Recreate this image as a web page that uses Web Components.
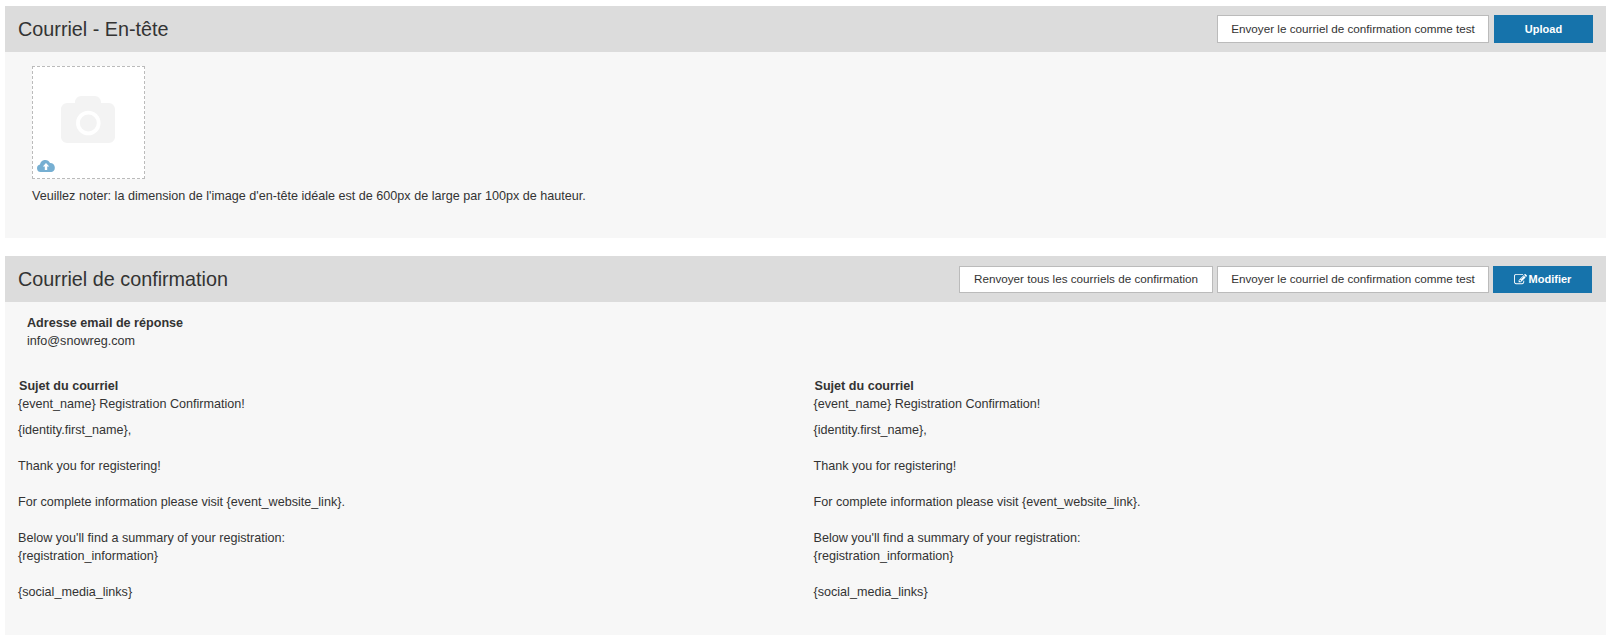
<!DOCTYPE html>
<html lang="fr">
<head>
<meta charset="utf-8">
<title>Courriel</title>
<style>
  html, body { margin: 0; background: #fff; }
  body { padding: 6px 2px 4px 5px; font: 12.6px/18px "Liberation Sans", Arial, sans-serif; color: #333; }
</style>
</head>
<body>
<x-panel heading="Courriel - En-tête" style="height:232px;--gap:5px">
  <x-button slot="actions" style="width:272px">Envoyer le courriel de confirmation comme test</x-button>
  <x-button slot="actions" primary style="width:99px">Upload</x-button>
  <x-upload-box></x-upload-box>
  <x-note>Veuillez noter: la dimension de l'image d'en-tête idéale est de 600px de large par 100px de hauteur.</x-note>
</x-panel>
<x-panel heading="Courriel de confirmation" tight style="height:379px;margin-top:18px">
  <x-button slot="actions" style="width:254px">Renvoyer tous les courriels de confirmation</x-button>
  <x-button slot="actions" style="width:272px">Envoyer le courriel de confirmation comme test</x-button>
  <x-button slot="actions" primary icon="edit" style="width:99px">Modifier</x-button>
  <x-field label="Adresse email de réponse" style="margin:12px 0 0 22px">info@snowreg.com</x-field>
  <x-mail-columns>
    <x-mail-preview></x-mail-preview>
    <x-mail-preview></x-mail-preview>
  </x-mail-columns>
</x-panel>

<script>
const panelTpl = document.createElement('template');
panelTpl.innerHTML = `
  <style>
    :host{display:block; background:#f7f7f7}
    header{display:flex; align-items:center; justify-content:space-between; height:46px; background:#dcdcdc; padding:0 13px}
    :host([tight]) header{padding-right:14px; --btn-h:27px}
    h2{margin:0; font-weight:400; font-size:19.8px; line-height:46px; color:#333}
    .actions{display:flex; gap:var(--gap, 4px)}
  </style>
  <header>
    <h2 id="title"></h2>
    <div class="actions"><slot name="actions"></slot></div>
  </header>
  <slot></slot>
`;
customElements.define('x-panel', class extends HTMLElement{
  constructor(){
    super();
    this.attachShadow({mode:'open'}).appendChild(panelTpl.content.cloneNode(true));
  }
  connectedCallback(){
    this.shadowRoot.getElementById('title').textContent = this.getAttribute('heading') ?? '';
  }
});

const buttonTpl = document.createElement('template');
buttonTpl.innerHTML = `
  <style>
    :host{display:flex; align-items:center; justify-content:center; box-sizing:border-box; height:var(--btn-h, 28px);
      background:#fff; border:1px solid #bbb; color:#333; font-size:11.7px; white-space:nowrap}
    :host([primary]){background:#1673ab; border-color:#1673ab; color:#fff; font-weight:700; font-size:11px}
    svg{width:13px; height:13px; margin-right:2px; fill:#fff; display:none}
    :host([icon]) svg{display:block}
  </style>
  <svg viewBox="0 0 1792 1792" aria-hidden="true">
    <path d="M888 1184l116-116-152-152-116 116v56h96v96h56zm440-720q-16-16-33 1l-350 350q-17 17-1 33t33-1l350-350q17-17 1-33zm80 594v190q0 119-84.500 203.500t-203.500 84.500h-832q-119 0-203.500-84.500t-84.500-203.500v-832q0-119 84.500-203.500t203.500-84.500h832q63 0 117 25 15 7 18 23 3 17-9 29l-49 49q-14 14-32 8-23-6-45-6h-832q-66 0-113 47t-47 113v832q0 66 47 113t113 47h832q66 0 113-47t47-113v-126q0-13 9-22l64-64q15-15 35-7t20 29zm-96-738l288 288-672 672h-288v-288zm444 132l-92 92-288-288 92-92q28-28 68-28t68 28l152 152q28 28 28 68t-28 68z"/>
  </svg>
  <slot></slot>
`;
customElements.define('x-button', class extends HTMLElement{
  constructor(){
    super();
    this.attachShadow({mode:'open'}).appendChild(buttonTpl.content.cloneNode(true));
  }
});

const uploadTpl = document.createElement('template');
uploadTpl.innerHTML = `
  <style>
    :host{display:block; position:relative; box-sizing:border-box; width:113px; height:113px; margin:14px 0 0 27px;
      background:#fff; border:1px dashed #bbb}
    .cam{display:block; width:54px; height:47px; margin:29px 0 0 28px}
    .cloud{position:absolute; left:4px; bottom:6px; width:18px; height:13px}
  </style>
  <svg class="cam" viewBox="0 0 54 47" aria-hidden="true">
    <path fill="#f3f3f3" fill-rule="evenodd" d="M14 7V6c0-3 3-6 6-6h14c3 0 6 3 6 6v1h8c3 0 6 3 6 6v28c0 3-3 6-6 6H6c-3 0-6-3-6-6V13c0-3 3-6 6-6zM27.300 14.700a12.300 12.300 0 1 0 0 24.600a12.300 12.300 0 1 0 0-24.600z"/>
    <circle cx="27.300" cy="27" r="8.500" fill="#f3f3f3"/>
  </svg>
  <svg class="cloud" viewBox="0 0 18 13" aria-hidden="true">
    <path fill="#76afd2" d="M4 13a3.800 3.800 0 0 1-1-7.500A5.300 5.300 0 0 1 13 4a4.600 4.600 0 0 1 1.500 9z"/>
    <path fill="#fff" d="M9 4l3.200 3.500h-2v3.500H7.800V7.500h-2z"/>
  </svg>
`;
customElements.define('x-upload-box', class extends HTMLElement{
  constructor(){
    super();
    this.attachShadow({mode:'open'}).appendChild(uploadTpl.content.cloneNode(true));
  }
});

const noteTpl = document.createElement('template');
noteTpl.innerHTML = `
  <style>:host{display:block; margin:8px 0 0 27px}</style>
  <slot></slot>
`;
customElements.define('x-note', class extends HTMLElement{
  constructor(){
    super();
    this.attachShadow({mode:'open'}).appendChild(noteTpl.content.cloneNode(true));
  }
});

const fieldTpl = document.createElement('template');
fieldTpl.innerHTML = `
  <style>
    :host{display:block}
    b{display:block; font-weight:700}
  </style>
  <b id="label"></b>
  <slot></slot>
`;
customElements.define('x-field', class extends HTMLElement{
  constructor(){
    super();
    this.attachShadow({mode:'open'}).appendChild(fieldTpl.content.cloneNode(true));
  }
  connectedCallback(){
    this.shadowRoot.getElementById('label').textContent = this.getAttribute('label') ?? '';
  }
});

const columnsTpl = document.createElement('template');
columnsTpl.innerHTML = `
  <style>:host{display:grid; grid-template-columns:795.5px 1fr; padding:28px 0 0 13px}</style>
  <slot></slot>
`;
customElements.define('x-mail-columns', class extends HTMLElement{
  constructor(){
    super();
    this.attachShadow({mode:'open'}).appendChild(columnsTpl.content.cloneNode(true));
  }
});

const previewTpl = document.createElement('template');
previewTpl.innerHTML = `
  <style>
    :host{display:block}
    b{display:block; font-weight:700; padding-left:1px; line-height:17px}
    .subject{margin-bottom:8px}
    p{margin:0 0 18px}
  </style>
  <b>Sujet du courriel</b>
  <div class="subject">{event_name} Registration Confirmation!</div>
  <p>{identity.first_name},</p>
  <p>Thank you for registering!</p>
  <p>For complete information please visit {event_website_link}.</p>
  <p>Below you'll find a summary of your registration:<br>{registration_information}</p>
  <p>{social_media_links}</p>
`;
customElements.define('x-mail-preview', class extends HTMLElement{
  constructor(){
    super();
    this.attachShadow({mode:'open'}).appendChild(previewTpl.content.cloneNode(true));
  }
});
</script>
</body>
</html>
